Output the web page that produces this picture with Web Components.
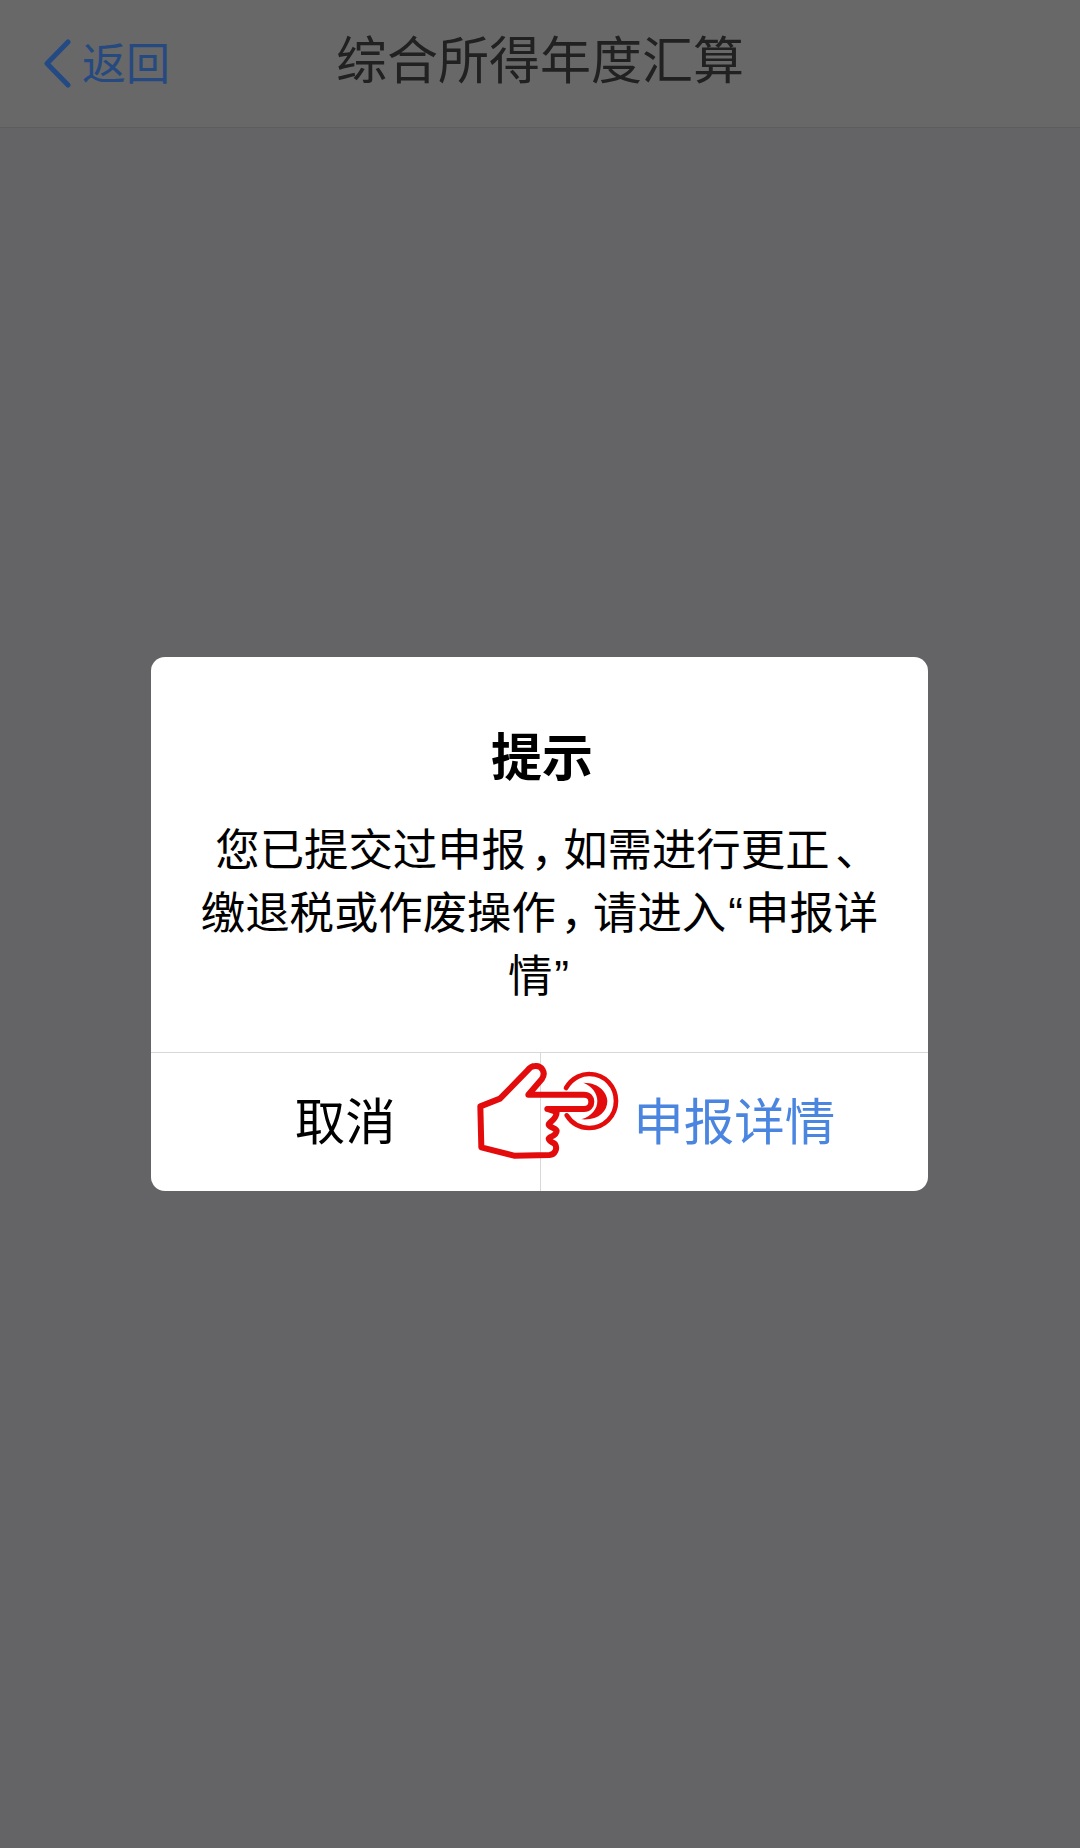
<!DOCTYPE html>
<html lang="zh-CN">
<head>
<meta charset="utf-8">
<title>综合所得年度汇算</title>
<style>
  html, body { margin: 0; padding: 0; background: #646466; }
  body { font-family: "Noto Sans CJK SC", "Liberation Sans", sans-serif; }
</style>
</head>
<body>
<app-screen>
  <nav-bar back="返回">综合所得年度汇算</nav-bar>
  <alert-dialog>
    <span slot="title">提示</span>
    <message-line>您已提交过申报<alert-punct kind="comma">，</alert-punct>如需进行更正<alert-punct kind="mark">、</alert-punct></message-line>
    <message-line>缴退税或作废操作<alert-punct kind="comma">，</alert-punct>请进入<alert-punct kind="quote">“</alert-punct>申报详</message-line>
    <message-line>情<alert-punct kind="quote">”</alert-punct></message-line>
    <dialog-button slot="actions">取消</dialog-button>
    <dialog-button slot="actions" primary>申报详情</dialog-button>
    <pointing-hand slot="overlay"></pointing-hand>
  </alert-dialog>
</app-screen>

<script>
// page shell
class AppScreen extends HTMLElement {
    constructor() {
        super();
        this.attachShadow({ mode: 'open' }).innerHTML = `
            <style>
                :host {
                    display: flex;
                    flex-direction: column;
                    position: relative;
                    height: 1848px;
                    overflow: hidden;
                    background: #646466;
                }
            </style>
            <slot></slot>
        `;
    }
}

class NavBar extends HTMLElement {
    constructor() {
        super();
        this.attachShadow({ mode: 'open' });
    }

    connectedCallback() {
        const back = this.getAttribute('back') || '';
        this.shadowRoot.innerHTML = `
            <style>
                :host {
                    display: grid;
                    grid-template-columns: 1fr auto 1fr;
                    align-items: center;
                    height: 127px;
                    background: #686868;
                    border-bottom: 1px solid #5d5d5d;
                }
                .back {
                    display: flex;
                    align-items: center;
                    gap: 11px;
                    padding: 0 0 5px 43px;
                    color: #264a80;
                    font-size: 44px;
                    line-height: 120px;
                }
                .back svg { display: block; flex: none; margin-top: 5px; }
                .title {
                    padding-bottom: 14px;
                    color: #212121;
                    font-size: 51px;
                    line-height: 110px;
                    white-space: nowrap;
                }
            </style>
            <div class="back">
                <svg width="28" height="49" viewBox="0 0 28 49" aria-hidden="true">
                    <path d="M25 3 L4 24.5 L25 46" fill="none" stroke="#234a84" stroke-width="5" stroke-linecap="round" stroke-linejoin="round"/>
                </svg>
                <span>${back}</span>
            </div>
            <div class="title"><slot></slot></div>
            <div></div>
        `;
    }
}

class AlertDialog extends HTMLElement {
    constructor() {
        super();
        this.attachShadow({ mode: 'open' }).innerHTML = `
            <style>
                :host {
                    display: flex;
                    position: absolute;
                    inset: 0;
                    align-items: center;
                    justify-content: center;
                }
                .panel {
                    position: relative;
                    width: 777px;
                    margin-right: 1px;
                    background: #fff;
                    border-radius: 14px;
                    overflow: hidden;
                }
                .title {
                    padding: 66.5px 0 0 5px;
                    color: #000;
                    font-size: 51px;
                    font-weight: 700;
                    line-height: 60px;
                    text-align: center;
                }
                .message {
                    padding: 31px 0 48.5px;
                    color: #000;
                    font-size: 44.4px;
                    line-height: 63px;
                    text-align: center;
                }
                .actions {
                    display: grid;
                    grid-template-columns: 1fr 1fr;
                    height: 138px;
                    border-top: 1px solid #d8d8d8;
                }
            </style>
            <div class="panel">
                <div class="title"><slot name="title"></slot></div>
                <div class="message"><slot></slot></div>
                <div class="actions"><slot name="actions"></slot></div>
                <slot name="overlay"></slot>
            </div>
        `;
    }
}

class MessageLine extends HTMLElement {
    constructor() {
        super();
        this.attachShadow({ mode: 'open' }).innerHTML = `<style>
                :host { display: block; white-space: nowrap; }
            </style><slot></slot>`;
    }
}

// punctuation in the message is set narrower than the ideographs
// no whitespace around the slot here: it would render as spaces in the inline host
class AlertPunct extends HTMLElement {
    constructor() {
        super();
        this.attachShadow({ mode: 'open' }).innerHTML = `<style>
                :host { display: inline; font-feature-settings: "palt" 1; line-height: 0; }
                :host([kind="comma"]) { margin: 0 7.5px; }
                :host([kind="mark"]) { margin: 0 6px; }
                :host([kind="quote"]) {
                    margin: 0 2px;
                    font-family: "Liberation Sans", sans-serif;
                }
            </style><slot></slot>`;
    }
}

class DialogButton extends HTMLElement {
    constructor() {
        super();
        this.attachShadow({ mode: 'open' }).innerHTML = `
            <style>
                :host {
                    display: flex;
                    align-items: center;
                    justify-content: center;
                    color: #000;
                    font-size: 50.5px;
                    padding-bottom: 8px;
                    box-sizing: border-box;
                }
                :host([primary]) {
                    color: #4a86e0;
                    border-left: 1px solid #d8d8d8;
                }
            </style>
            <slot></slot>
        `;
    }
}

// red hand annotation drawn over the button row
class PointingHand extends HTMLElement {
    constructor() {
        super();
        this.attachShadow({ mode: 'open' }).innerHTML = `
            <style>
                :host {
                    display: block;
                    position: absolute;
                    left: 289px;
                    top: 383px;
                    width: 220px;
                    height: 130px;
                    pointer-events: none;
                }
                svg { display: block; }
            </style>
            <svg width="220" height="130" viewBox="0 0 660 390" aria-hidden="true">
                <g fill="none" stroke="#e30b0b" stroke-width="18" stroke-linejoin="round" stroke-linecap="round">
                    <path d="M322 207 L432 207 C447 207 454 196 454 185 C454 174 447 164 432 164 L265 164 L305 118 C320 98 305 76 285 78 C275 78 268 84 262 92 L180 176 L121 199 L124 322 L222 347 L328 345 C346 344 353 325 345 312 C336 306 326 302 326 296 C326 290 350 288 350 272 C350 264 326 262 326 254 C326 246 350 240 350 216 L322 207"/>
                    <path d="M378 144 C398 110 430 101 450 102 C495 103 528 140 528 183 C528 228 492 264 448 264 C420 264 395 250 380 226" stroke-width="14"/>
                </g>
                <path d="M430 128 C482 128 502 162 502 183 C502 214 476 242 424 238 C456 228 472 206 472 183 C472 160 456 138 430 128 Z" fill="#e30b0b"/>
            </svg>
        `;
    }
}

customElements.define('app-screen', AppScreen);
customElements.define('nav-bar', NavBar);
customElements.define('alert-dialog', AlertDialog);
customElements.define('message-line', MessageLine);
customElements.define('alert-punct', AlertPunct);
customElements.define('dialog-button', DialogButton);
customElements.define('pointing-hand', PointingHand);
</script>
</body>
</html>
